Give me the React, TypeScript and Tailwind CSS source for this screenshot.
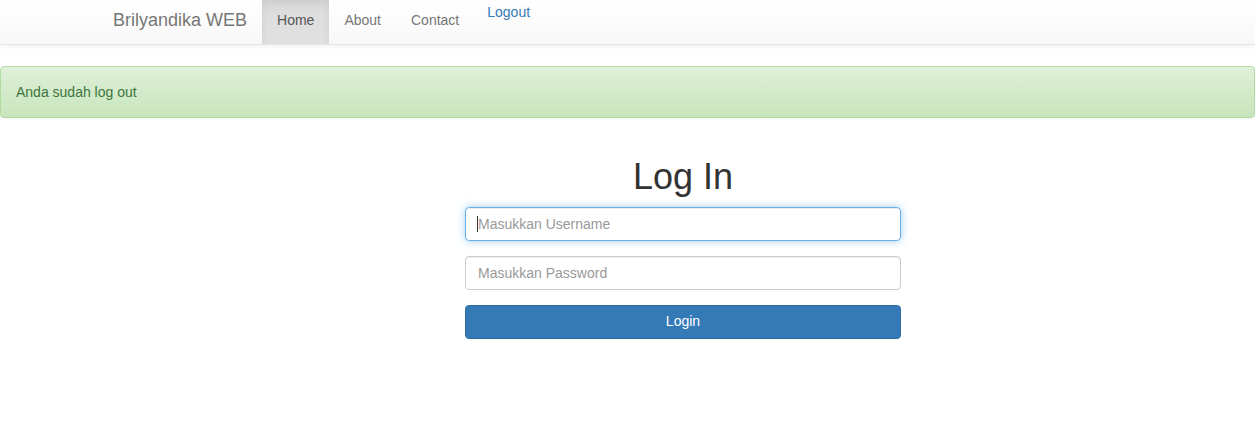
export default function App() {
  return (
    <div className="min-h-[430px] bg-white text-[14px] text-[#333] [font-family:'Liberation_Sans',Arial,sans-serif]">
      {/* Navbar */}
      <nav className="h-[45px] border-b border-[#e7e7e7] bg-gradient-to-b from-white to-[#f8f8f8] shadow-[0_1px_5px_rgba(0,0,0,0.075)]">
        <div className="flex h-[44px] pl-[113px]">
          <a className="flex h-[44px] items-center pb-[4px] pr-[15px] text-[18px] text-[#777]">Brilyandika WEB</a>
          <a className="flex h-[44px] items-center bg-gradient-to-b from-[#dbdbdb] to-[#e2e2e2] px-[15px] pb-[4px] text-[#555] shadow-[inset_0_3px_9px_rgba(0,0,0,0.075)]">Home</a>
          <a className="flex h-[44px] items-center px-[15px] pb-[4px] text-[#777]">About</a>
          <a className="flex h-[44px] items-center px-[15px] pb-[4px] text-[#777]">Contact</a>
          <a className="ml-[13px] pt-[2px] leading-[20px] text-[#337ab7]">Logout</a>
        </div>
      </nav>

      {/* Alert */}
      <div className="mt-[21px] flex h-[52px] items-center rounded-[4px] border border-[#b2dba1] bg-gradient-to-b from-[#dff0d8] to-[#c8e5bc] px-[15px] text-[#3c763d] shadow-[inset_0_1px_0_rgba(255,255,255,0.25),0_1px_2px_rgba(0,0,0,0.05)]">
        Anda sudah log out
      </div>

      {/* Login form */}
      <div className="ml-[465px] w-[436px] pt-[19px]">
        <h1 className="mb-[10px] mt-[20px] text-center text-[36px] leading-[1.1] font-normal text-[#333]">Log In</h1>
        <div className="relative mb-[15px]">
          <input
            placeholder="Masukkan Username"
            className="h-[34px] w-full rounded-[4px] border border-[#66afe9] px-[12px] text-[14px] text-[#555] outline-none placeholder:text-[#999] shadow-[inset_0_1px_1px_rgba(0,0,0,0.075),0_0_8px_rgba(102,175,233,0.6)]"
          />
          <span className="absolute left-[12px] top-[9px] h-[16px] w-px bg-[#333]" />
        </div>
        <div className="mb-[15px]">
          <input
            type="password"
            placeholder="Masukkan Password"
            className="h-[34px] w-full rounded-[4px] border border-[#ccc] px-[12px] text-[14px] text-[#555] outline-none placeholder:text-[#999] shadow-[inset_0_1px_1px_rgba(0,0,0,0.075)]"
          />
        </div>
        <button className="h-[34px] w-full rounded-[4px] border border-[#2e6da4] bg-[#337ab7] text-[14px] text-white">
          Login
        </button>
      </div>
    </div>
  )
}
